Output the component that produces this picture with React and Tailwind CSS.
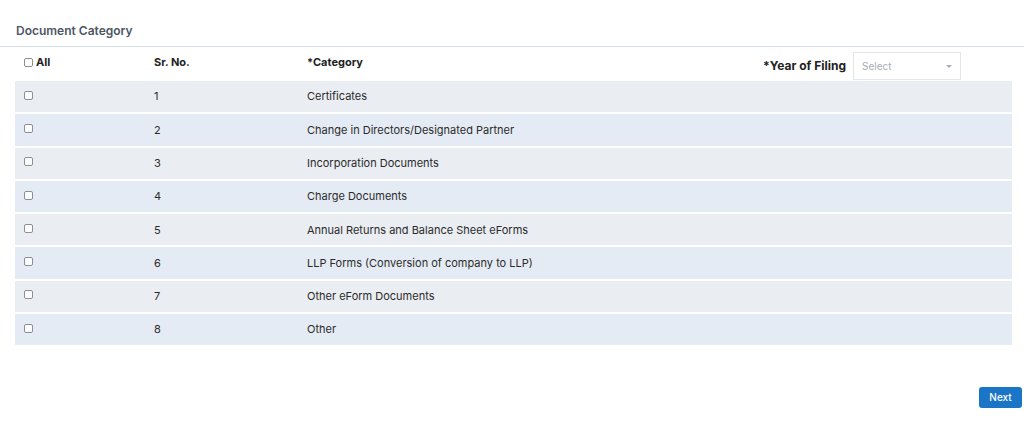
import React from "react";

const rows = [
    "Certificates",
    "Change in Directors/Designated Partner",
    "Incorporation Documents",
    "Charge Documents",
    "Annual Returns and Balance Sheet eForms",
    "LLP Forms (Conversion of company to LLP)",
    "Other eForm Documents",
    "Other",
];

const Box = () => (
    <span className="inline-block w-[9px] h-[9px] border border-[#8a8f98] rounded-[2px] bg-white" />
);

const App = () => {
    return (
        <div className="w-[1024px] h-[431px] bg-white text-[#333] flex flex-col font-['Inter','Noto_Sans',sans-serif]">
            {/* Title */}
            <div className="pt-[22px] pb-[6px] pl-[16px] border-b border-[#d5dee6] text-[12px] font-semibold text-[#4d5663]">
                Document Category
            </div>

            {/* Table */}
            <div className="pl-[15px] pr-[12px] pt-[5px]">
                <div className="flex items-center h-[28px] text-[11px] font-bold text-[#222]">
                    <div className="w-[131px] pl-[9px] flex items-center gap-[3px] -mt-[8px]">
                        <Box />
                        <span>All</span>
                    </div>
                    <div className="w-[153px] pl-[8px] -mt-[8px]">Sr. No.</div>
                    <div className="flex-1 pl-[8px] -mt-[8px]">*Category</div>
                    <div className="flex items-center gap-[7px] pr-[51px]">
                        <span className="text-[12px]">*Year of Filing</span>
                        <div className="w-[108px] h-[28px] border border-[#e2e5ea] flex items-center justify-between pl-[8px] pr-[8px] font-normal text-[10px] text-[#a9adb3]">
                            <span>Select</span>
                            <span className="w-0 h-0 border-l-[3px] border-r-[3px] border-t-[3px] border-l-transparent border-r-transparent border-t-[#a9adb3]" />
                        </div>
                    </div>
                </div>

                <div className="flex flex-col gap-[2px] mt-[1px]">
                    {rows.map((name, i) => (
                        <div
                            key={name}
                            className={
                                "flex items-center h-[31.3px] text-[11px] text-[#2b2b2b] " +
                                (i % 2 === 0 ? "bg-[#eaedf2]" : "bg-[#e5ebf4]")
                            }
                        >
                            <div className="w-[131px] pl-[9px] flex items-center -mt-[3px]">
                                <Box />
                            </div>
                            <div className="w-[153px] pl-[8px]">{i + 1}</div>
                            <div className="flex-1 pl-[8px]">{name}</div>
                        </div>
                    ))}
                </div>
            </div>

            {/* Footer */}
            <div className="flex justify-end pr-[2px] mt-[42px]">
                <button className="w-[43px] h-[21px] rounded-[3px] bg-[#1b75c7] text-white text-[10px] font-medium">
                    Next
                </button>
            </div>
        </div>
    );
};

export default App;
